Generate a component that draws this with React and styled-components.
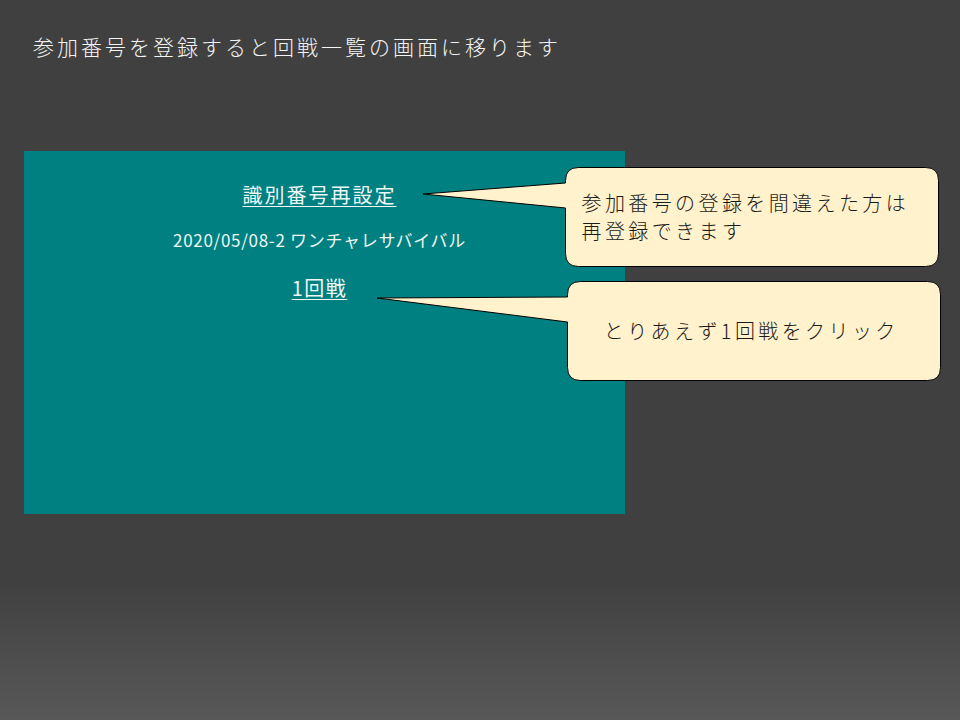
import React from 'react'
import styled, { createGlobalStyle } from 'styled-components'

const GlobalStyle = createGlobalStyle`
  html, body {
    margin: 0;
    padding: 0;
  }

  body {
    min-height: 720px;
    background: linear-gradient(
      to bottom,
      #404040 0px,
      #404040 580px,
      #585858 720px
    );
    background-repeat: no-repeat;
    background-color: #585858;
    font-family: 'Noto Sans CJK JP', 'Noto Sans', sans-serif;
  }
`

const Page = styled.div`
  position: relative;
  box-sizing: border-box;
  width: 960px;
  height: 720px;
  padding: 33px 24px 0;
`

const Title = styled.h1`
  margin: 0;
  padding-left: 9px;
  font-size: 21px;
  font-weight: 300;
  line-height: 26px;
  letter-spacing: 3px;
  color: #f4f4f4;
`

const Panel = styled.section`
  box-sizing: border-box;
  width: 601px;
  height: 363px;
  margin-top: 92px;
  padding: 30px 10px 0 0;
  background: #008080;
  display: flex;
  flex-direction: column;
  align-items: center;
  color: #eef6f6;
`

const PanelLink = styled.a`
  display: block;
  font-size: 20px;
  line-height: 28px;
  letter-spacing: ${({ $spacing }) => $spacing || '2px'};
  color: #eef6f6;
  text-decoration: underline;
  text-decoration-thickness: 1px;
  text-underline-offset: 3px;
  margin-top: ${({ $gap }) => $gap || 0};
  cursor: pointer;
`

const EventName = styled.p`
  margin: 19px 0 0;
  font-size: 17px;
  line-height: 24px;
  letter-spacing: 0.7px;
`

const CalloutWrap = styled.div`
  position: absolute;
  left: ${({ $left }) => $left}px;
  top: ${({ $top }) => $top}px;
  width: ${({ $width }) => $width}px;
  height: ${({ $height }) => $height}px;
`

const CalloutShape = styled.svg`
  position: absolute;
  inset: 0;
  overflow: visible;
`

const CalloutText = styled.div`
  position: absolute;
  top: 2px;
  bottom: 2px;
  right: 2px;
  left: ${({ $boxX }) => $boxX + 1}px;
  box-sizing: border-box;
  padding: ${({ $center }) => ($center ? '0 6px 0 0' : '0 8px 0 15px')};
  display: flex;
  flex-direction: column;
  justify-content: center;
  align-items: ${({ $center }) => ($center ? 'center' : 'flex-start')};
  font-size: 20px;
  font-weight: 300;
  line-height: 28px;
  letter-spacing: 3.4px;
  color: #1a1a1a;
`

const CalloutLine = styled.span`
  display: block;
  white-space: nowrap;
`

function bubblePath(w, h, boxX, r, tailTop, tailBottom, tipY) {
  const x0 = boxX
  const x1 = w - 1.5
  const y0 = 1.5
  const y1 = h - 1.5
  return [
    `M ${x0 + r} ${y0}`,
    `H ${x1 - r}`,
    `Q ${x1} ${y0} ${x1} ${y0 + r}`,
    `V ${y1 - r}`,
    `Q ${x1} ${y1} ${x1 - r} ${y1}`,
    `H ${x0 + r}`,
    `Q ${x0} ${y1} ${x0} ${y1 - r}`,
    `V ${tailBottom}`,
    `L 1 ${tipY}`,
    `L ${x0} ${tailTop}`,
    `V ${y0 + r}`,
    `Q ${x0} ${y0} ${x0 + r} ${y0}`,
    'Z',
  ].join(' ')
}

function Callout({ left, top, width, height, boxX, tailTop, tailBottom, tipY, center, lines }) {
  return (
    <CalloutWrap $left={left} $top={top} $width={width} $height={height}>
      <CalloutShape width={width} height={height} viewBox={`0 0 ${width} ${height}`}>
        <path
          d={bubblePath(width, height, boxX, 13, tailTop, tailBottom, tipY)}
          fill="#fff2cc"
          stroke="#000"
          strokeWidth="1"
        />
      </CalloutShape>
      <CalloutText $boxX={boxX} $center={center}>
        {lines.map((line) => (
          <CalloutLine key={line}>{line}</CalloutLine>
        ))}
      </CalloutText>
    </CalloutWrap>
  )
}

export default function App() {
  return (
    <>
      <GlobalStyle />
      <Page>
        <Title>参加番号を登録すると回戦一覧の画面に移ります</Title>
        <Panel>
          <PanelLink>識別番号再設定</PanelLink>
          <EventName>2020/05/08-2 ワンチャレサバイバル</EventName>
          <PanelLink $gap="22px" $spacing="1.5px">1回戦</PanelLink>
        </Panel>

        <Callout
          left={422}
          top={166}
          width={518}
          height={102}
          boxX={143.5}
          tailTop={17}
          tailBottom={42}
          tipY={28}
          lines={['参加番号の登録を間違えた方は', '再登録できます']}
        />

        <Callout
          left={376}
          top={280}
          width={566}
          height={102}
          boxX={191.5}
          tailTop={17}
          tailBottom={42}
          tipY={18}
          center
          lines={['とりあえず1回戦をクリック']}
        />
      </Page>
    </>
  )
}
